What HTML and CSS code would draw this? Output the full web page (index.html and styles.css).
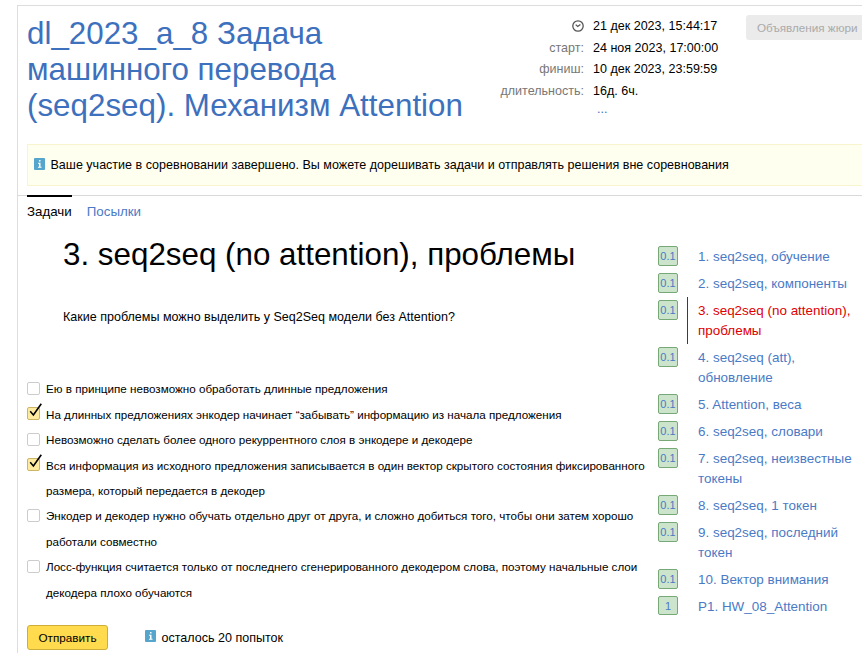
FILE: index.html
```html
<!DOCTYPE html>
<html lang="ru">
<head>
<meta charset="utf-8">
<title>seq2seq</title>
<link rel="stylesheet" href="styles.css">
</head>
<body>
<div class="page">
  <header class="head">
    <h1 class="title">dl_2023_a_8 Задача<br>машинного перевода<br>(seq2seq). Механизм Attention</h1>
    <dl class="times">
      <dt><svg class="clock" viewBox="0 0 12 12"><circle cx="6" cy="6" r="5.2"/><path d="M3.7 4.6 5.7 6.5 8.4 4.4"/></svg></dt><dd>21 дек 2023, 15:44:17</dd>
      <dt>старт:</dt><dd>24 ноя 2023, 17:00:00</dd>
      <dt>финиш:</dt><dd>10 дек 2023, 23:59:59</dd>
      <dt>длительность:</dt><dd>16д. 6ч.</dd>
      <dt></dt><dd class="more">...</dd>
    </dl>
    <button class="jury" disabled>Объявления жюри</button>
  </header>
  <div class="notice"><svg class="info" viewBox="0 0 11 12"><rect width="11" height="12" rx="1"/><path d="M5 2h1.5v1.4H5zM4 4.7h2.5v4h1v1H4v-1h1v-3H4z"/></svg><span>Ваше участие в соревновании завершено. Вы можете дорешивать задачи и отправлять решения вне соревнования</span></div>
  <nav class="tabs"><a class="tab active">Задачи</a><a class="tab">Посылки</a></nav>
  <div class="body">
    <main class="problem">
      <h2 class="name">3. seq2seq (no attention), проблемы</h2>
      <p class="question">Какие проблемы можно выделить у Seq2Seq модели без Attention?</p>
      <div class="options">
        <label class="option"><span class="box"></span><span>Ею в принципе невозможно обработать длинные предложения</span></label>
        <label class="option"><span class="box checked"><svg class="tick" viewBox="0 0 16 17"><path d="M3.2 8.3 6.4 12 14.3 .8"/></svg></span><span>На длинных предложениях энкодер начинает “забывать” информацию из начала предложения</span></label>
        <label class="option"><span class="box"></span><span>Невозможно сделать более одного рекуррентного слоя в энкодере и декодере</span></label>
        <label class="option"><span class="box checked"><svg class="tick" viewBox="0 0 16 17"><path d="M3.2 8.3 6.4 12 14.3 .8"/></svg></span><span>Вся информация из исходного предложения записывается в один вектор скрытого состояния фиксированного<br>размера, который передается в декодер</span></label>
        <label class="option"><span class="box"></span><span>Энкодер и декодер нужно обучать отдельно друг от друга, и сложно добиться того, чтобы они затем хорошо<br>работали совместно</span></label>
        <label class="option"><span class="box"></span><span>Лосс-функция считается только от последнего сгенерированного декодером слова, поэтому начальные слои<br>декодера плохо обучаются</span></label>
      </div>
      <div class="actions">
        <button class="submit">Отправить</button>
        <svg class="info" viewBox="0 0 11 12"><rect width="11" height="12" rx="1"/><path d="M5 2h1.5v1.4H5zM4 4.7h2.5v4h1v1H4v-1h1v-3H4z"/></svg><span class="left">осталось 20 попыток</span>
      </div>
    </main>
    <aside class="list">
      <div class="task"><span class="score">0.1</span><a>1. seq2seq, обучение</a></div>
      <div class="task"><span class="score">0.1</span><a>2. seq2seq, компоненты</a></div>
      <div class="task current"><span class="score">0.1</span><a>3. seq2seq (no attention),<br>проблемы</a></div>
      <div class="task"><span class="score">0.1</span><a>4. seq2seq (att),<br>обновление</a></div>
      <div class="task"><span class="score">0.1</span><a>5. Attention, веса</a></div>
      <div class="task"><span class="score">0.1</span><a>6. seq2seq, словари</a></div>
      <div class="task"><span class="score">0.1</span><a>7. seq2seq, неизвестные<br>токены</a></div>
      <div class="task"><span class="score">0.1</span><a>8. seq2seq, 1 токен</a></div>
      <div class="task"><span class="score">0.1</span><a>9. seq2seq, последний<br>токен</a></div>
      <div class="task"><span class="score">0.1</span><a>10. Вектор внимания</a></div>
      <div class="task"><span class="score whole">1</span><a>P1. HW_08_Attention</a></div>
    </aside>
  </div>
</div>
</body>
</html>
```
FILE: styles.css
```css
* { box-sizing: border-box; }
html, body { height: 100%; overflow: hidden; }
body { margin: 0; background: #fff; color: #000; font-family: "Liberation Sans", Arial, sans-serif; }
.page { height: 648px; margin: 5px 0 0 17px; border: solid #ddd; border-width: 1px 0 0 1px; white-space: nowrap; }
.head { display: flex; align-items: flex-start; height: 138px; padding-left: 9px; }
.title { flex: none; width: 448px; margin: 10px 0 0; font-size: 31.35px; line-height: 36px; font-weight: 400; color: #3d70bd; }
.times { flex: none; display: grid; grid-template-columns: 109px 1fr; grid-template-rows: repeat(4, 21.5px) 16px; column-gap: 9px; width: 271px; margin: 10px 0 0; font-size: 12.54px; line-height: 21.5px; }
.times dt { text-align: right; color: #777; }
.times dd { margin: 0; }
.times .more { padding-left: 4px; line-height: 15px; color: #3d70bd; }
.clock { width: 12px; height: 12px; vertical-align: -2px; fill: none; stroke: #555; stroke-width: 1.3; }
.jury { width: 130px; height: 25px; flex: none; margin-top: 9px; padding: 0 0 1px 11px; text-align: left; border: 0; border-radius: 3px; background: #ebebeb; color: #aaa; font: 11.7px "Liberation Sans", Arial, sans-serif; }
.notice { display: flex; align-items: center; height: 42px; margin-left: 9px; padding-left: 6px; border: 1px solid #f8f4cd; border-right: 0; background: #fffff0; font-size: 12.54px; }
.info { width: 11px; height: 12px; margin: 0 5.5px 2px 0; flex: none; fill: #55a5cd; }
.info path { fill: #fff; }
.tabs { display: flex; gap: 15px; height: 37px; margin-top: 9px; padding-left: 9px; border-top: 1px solid #d9d9d9; font-size: 13.33px; line-height: 29px; color: #4a7ac5; }
.tab { margin-top: -1px; padding-top: 0; border-top: 2px solid transparent; }
.active { border-color: #000; color: #000; }
.body { display: flex; }
.problem { width: 640px; padding-left: 9px; }
.name { margin: 4px 0 0 36px; font-size: 31.35px; font-weight: 400; line-height: 38px; }
.question { margin: 33px 0 0 36px; font-size: 12.54px; line-height: 20px; }
.options { margin-top: 49.3px; font-size: 11.65px; line-height: 25.4px; }
.option { display: flex; gap: 6px; }
.box { position: relative; width: 13px; height: 13px; margin-top: 5.7px; flex: none; border: 1px solid #ccc; border-radius: 2px; }
.checked { border-color: #cdb568; background: #ffeba0; }
.tick { position: absolute; left: -1px; top: -5px; width: 16px; height: 17px; fill: none; stroke: #000; stroke-width: 1.6; }
.actions { display: flex; align-items: center; margin-top: 19.7px; font-size: 12.54px; }
.left { padding-top: 2px; }
.submit { width: 81px; height: 25px; margin-right: 37px; padding: 1px 0 0; border: 1px solid #cfae38; border-radius: 3px; background: #ffdb4d; color: #000; font: 11.7px "Liberation Sans", Arial, sans-serif; }
.list { margin-top: 11px; font-size: 13.45px; line-height: 20px; color: #4a7ac5; }
.task { display: flex; align-items: flex-start; gap: 9px; }
.task a { padding: 4px 0 3px 10px; border-left: 1px solid transparent; }
.current a { border-color: #c00; color: #e00000; }
.score { width: 20px; height: 20px; margin-top: 3px; border: 1px solid #76a976; border-radius: 2px; background: #cce4cc; text-align: center; font-size: 11px; line-height: 18px; }
.whole { height: 19px; }
```
